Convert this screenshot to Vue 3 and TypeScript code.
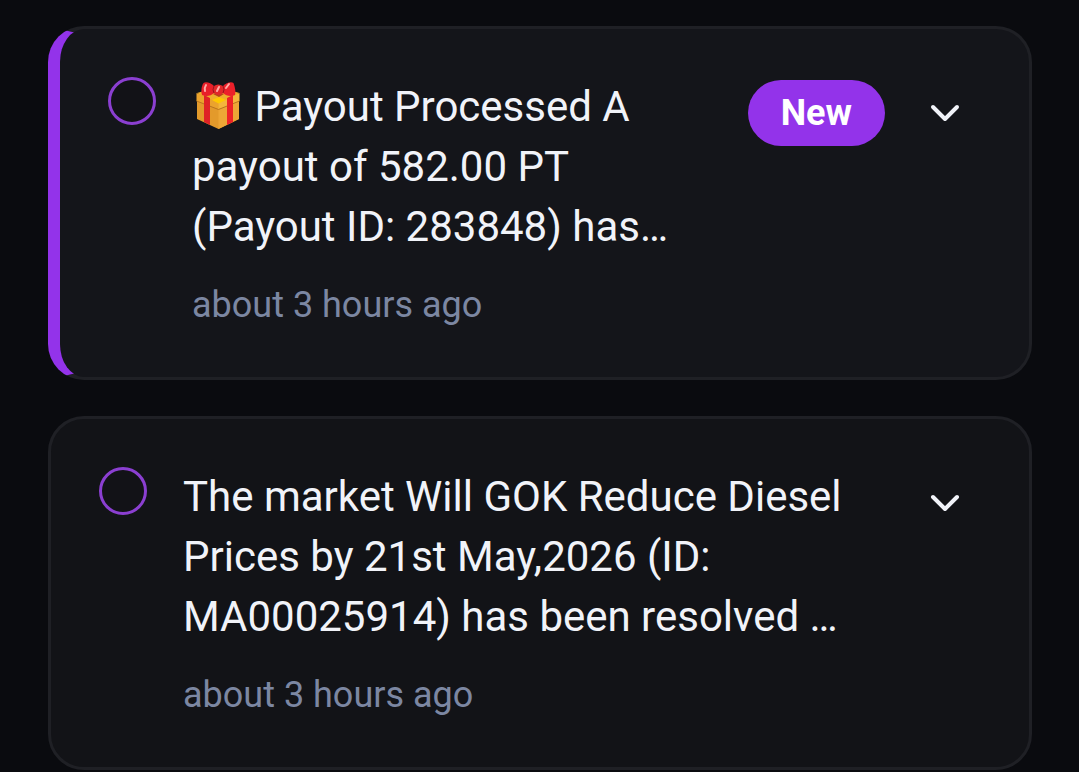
<script setup lang="ts">
import { ref } from 'vue'

interface Notice {
  id: number
  message: string
  time: string
  gift: boolean
  unread: boolean
  selected: boolean
}

const notices = ref<Notice[]>([
  {
    id: 1,
    message: 'Payout Processed A payout of 582.00 PT (Payout ID: 283848) has…',
    time: 'about 3 hours ago',
    gift: true,
    unread: true,
    selected: false,
  },
  {
    id: 2,
    message:
      'The market Will GOK Reduce Diesel Prices by 21st May,2026 (ID: MA00025914) has been resolved …',
    time: 'about 3 hours ago',
    gift: false,
    unread: false,
    selected: false,
  },
])
</script>

<template>
  <main class="list">
    <article
      v-for="notice in notices"
      :key="notice.id"
      class="card"
      :class="{ unread: notice.unread }"
    >
      <input
        v-model="notice.selected"
        class="select"
        type="checkbox"
        :aria-labelledby="`message-${notice.id}`"
      />
      <div class="body">
        <p :id="`message-${notice.id}`" class="message">
          <template v-if="notice.gift">
            <svg class="gift" viewBox="0 0 52 48" aria-hidden="true">
              <path d="M5 12 26 5 47 12V37L26.500 47 5 37Z" fill="#e39a2b" />
              <path d="M26.500 26 47 17V37L26.500 47Z" fill="#eda636" />
              <path d="M5 11 26 5 47.500 11 26.500 21Z" fill="#efae2c" />
              <path d="M4.500 11 26.500 21V27.500L4.500 19Z" fill="#eba32d" />
              <path d="M47.500 11 26.500 21V27.500L47.500 19Z" fill="#f4b53c" />
              <path d="M4.500 19 26.500 27.500 47.500 19" fill="none" stroke="#b8741f" stroke-width="1" />
              <path d="M12 13 18 16V43L12 40Z" fill="#df2226" />
              <path d="M35 16 41 13V40L35 43Z" fill="#ee2327" />
              <path d="M20 18 27 15 34 18 26.500 21.500Z" fill="#ffc800" />
              <path d="M21 12 26 10 32 12 27 15Z" fill="#b5461a" />
              <path d="M22 4C19 1 14-1 11.500 1 9 5 9 10 10 13 14 15 19 14 22 11Z" fill="#e81f29" />
              <path d="M31 4C34 1 39-1 41.500 1 43 5 44 10 43 13 39 15 34 14 31 11Z" fill="#ec202a" />
              <path d="M22 4Q26 1 31 4 32 8 31 11 29 13 27 13 24 13 22 11 21 8 22 4Z" fill="#e2282a" />
              <path d="M22 4Q20 8 22 11M31 4Q33 8 31 11" fill="none" stroke="#96151d" stroke-width="1" />
              <path d="M14 3Q12 6 13 9M37 2 34 6M27 5 25 9" fill="none" stroke="#ffaaa5" stroke-width="2" stroke-linecap="round" />
            </svg>
            {{ ' ' }}
          </template>
          {{ notice.message }}
        </p>
        <time class="time">{{ notice.time }}</time>
      </div>
      <div class="actions">
        <span v-if="notice.unread" class="badge">New</span>
        <button class="toggle" type="button" aria-label="Expand notification">
          <svg class="chevron" viewBox="0 0 24 24" aria-hidden="true">
            <path d="m6 9 6 6 6-6" />
          </svg>
        </button>
      </div>
    </article>
  </main>
</template>

<style>
body {
  margin: 0;
  background: #0a0b0f;
}
</style>

<style scoped>
.list {
  display: flex;
  flex-direction: column;
  gap: 36px;
  padding: 26px 47px 2px 48px;
  font-family: Roboto, "Noto Sans", sans-serif;
  color: #f1f3f9;
}

.card {
  display: flex;
  align-items: flex-start;
  gap: 36px;
  padding: 48px;
  border: 3px solid #1f2025;
  border-radius: 36px;
  background: #121317;
}

.card.unread {
  border-left: 12px solid #9333ea;
  background: #14151a;
}

.select {
  flex: none;
  appearance: none;
  box-sizing: border-box;
  width: 48px;
  height: 48px;
  margin: 0;
  border: 3px solid #8b3fd1;
  border-radius: 50%;
  background: #121217;
}

.select:checked {
  background: #9333ea;
}

.body {
  flex: 1;
  min-width: 0;
}

.message {
  margin: 0 0 24px;
  font-size: 42px;
  line-height: 60px;
}

.gift {
  width: 52px;
  height: 48px;
  vertical-align: -9px;
  overflow: visible;
}

.time {
  display: block;
  font-size: 36px;
  line-height: 48px;
  color: #7c87a2;
}

.actions {
  flex: none;
  display: flex;
  align-items: center;
  gap: 24px;
}

.badge {
  padding: 9px 33px;
  border-radius: 36px;
  background: #9333ea;
  font-size: 36px;
  font-weight: 700;
  line-height: 48px;
  color: #ffffff;
}

.toggle {
  display: flex;
  align-items: center;
  justify-content: center;
  width: 72px;
  height: 72px;
  padding: 0;
  border: 0;
  border-radius: 18px;
  background: transparent;
  color: inherit;
}

.chevron {
  width: 48px;
  height: 48px;
  fill: none;
  stroke: currentColor;
  stroke-width: 2;
  stroke-linecap: round;
  stroke-linejoin: round;
}
</style>
